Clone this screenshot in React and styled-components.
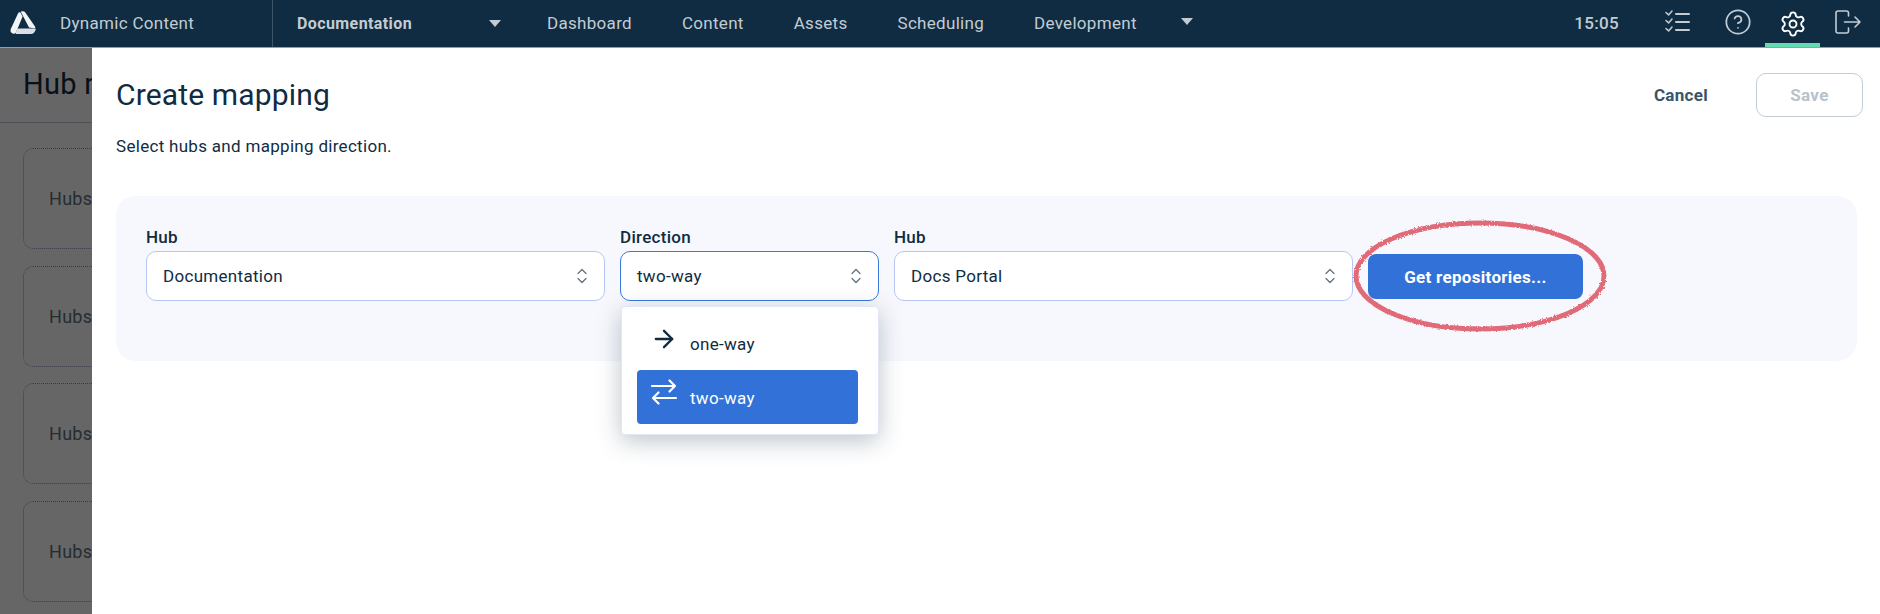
import React from 'react';
import styled, { createGlobalStyle } from 'styled-components';
import { ArrowRight, CircleHelp, Settings } from 'lucide-react';

const Global = createGlobalStyle`
    html, body {
        margin: 0;
        height: 100%;
        background: #fff;
    }
    #root {
        height: 100%;
    }
    * {
        box-sizing: border-box;
    }
`;

const FONT = `Roboto, "Noto Sans", sans-serif`;

const Screen = styled.div`
    position: relative;
    width: 1880px;
    height: 614px;
    overflow: hidden;
    font-family: ${FONT};
    color: #0f2c42;
    background: #fff;
    letter-spacing: 0.3px;
`;

const TopBar = styled.header`
    display: flex;
    align-items: stretch;
    height: 48px;
    background: #0f2c42;
    border-bottom: 1px solid #8fa0ad;
    color: #c3ccd3;
    font-size: 17px;
`;

const Brand = styled.div`
    display: flex;
    align-items: center;
    width: 273px;
    padding: 0 0 1px 10px;
    gap: 24px;
    border-right: 1px solid #3e5668;
`;

const HubName = styled.div`
    display: flex;
    align-items: center;
    justify-content: space-between;
    width: 228px;
    padding: 0 0 1px 24px;
    font-weight: 700;
    font-size: 16px;
    letter-spacing: 0.4px;
`;

const Nav = styled.nav`
    display: flex;
    align-items: center;
    gap: 50px;
    margin-left: 46px;
    padding-bottom: 1px;
`;

const Caret = styled.span`
    display: inline-block;
    width: 0;
    height: 0;
    border-left: 6.5px solid transparent;
    border-right: 6.5px solid transparent;
    border-top: 7px solid #c3ccd3;
`;

const NavCaret = styled(Caret)`
    margin-left: -6px;
    margin-top: -3px;
`;

const RightTools = styled.div`
    display: flex;
    align-items: center;
    margin-left: auto;
    padding-right: 5px;
`;

const Clock = styled.span`
    font-weight: 500;
    margin: 0 36px 1px 0;
`;

const ToolButton = styled.div`
    display: flex;
    align-items: center;
    justify-content: center;
    width: 55px;
    height: 47px;
    color: ${(p) => (p.$active ? '#fff' : '#c3ccd3')};
    border-bottom: 4px solid ${(p) => (p.$active ? '#63dbb0' : 'transparent')};
    padding-top: ${(p) => (p.$active ? 4 : 0)}px;
    padding-right: ${(p) => p.$inset || 0}px;
`;

const Behind = styled.main`
    height: 566px;
    overflow: hidden;
`;

const BehindHead = styled.div`
    height: 75px;
    padding: 16px 0 0 23px;
    font-size: 29px;
    line-height: 40px;
    border-bottom: 1px solid #c9c9e0;
`;

const HeadText = styled.div`
    width: 69px;
    overflow: hidden;
    white-space: nowrap;
`;

const BehindList = styled.div`
    display: flex;
    flex-direction: column;
    gap: 16.5px;
    padding: 25px 23px 0;
    width: 92px;
    overflow: hidden;
`;

const BehindCard = styled.div`
    display: flex;
    align-items: center;
    flex: none;
    height: 101px;
    width: 400px;
    padding-left: 25px;
    border: 1px dotted #8e90c4;
    border-radius: 10px;
    font-size: 18px;
    color: #5b7081;
`;

const Scrim = styled.div`
    position: absolute;
    inset: 48px 0 0 0;
    background: rgba(0, 0, 0, 0.6);
`;

const Drawer = styled.section`
    position: absolute;
    top: 48px;
    left: 92px;
    right: 0;
    bottom: 0;
    background: #fff;
    padding: 0 23px 0 24px;
`;

const DrawerHead = styled.div`
    display: flex;
    justify-content: space-between;
    align-items: flex-start;
    padding-top: 24px;
`;

const Title = styled.h1`
    margin: 0;
    font-size: 30px;
    font-weight: 400;
    line-height: 46px;
    letter-spacing: 0.15px;
`;

const Actions = styled.div`
    display: flex;
    align-items: center;
    gap: 48px;
    margin: 1px -6px 0 0;
`;

const Cancel = styled.span`
    font-weight: 700;
    font-size: 17px;
    color: #3a556b;
`;

const Save = styled.span`
    display: flex;
    align-items: center;
    justify-content: center;
    width: 107px;
    height: 44px;
    border: 1px solid #c3ccd3;
    border-radius: 10px;
    font-weight: 700;
    font-size: 17px;
    color: #b7c2ca;
`;

const Subtitle = styled.p`
    margin: 16px 0 0;
    font-size: 17px;
    line-height: 24px;
`;

const Panel = styled.div`
    display: flex;
    align-items: flex-end;
    gap: 15px;
    height: 165px;
    margin-top: 38px;
    padding: 0 30px 60px;
    background: #f7f8fd;
    border-radius: 20px;
`;

const Field = styled.div`
    position: relative;
    display: flex;
    flex-direction: column;
    gap: 4px;
    width: ${(p) => p.$w}px;
`;

const Label = styled.label`
    font-size: 17px;
    font-weight: 500;
    line-height: 20px;
`;

const Select = styled.div`
    display: flex;
    align-items: center;
    justify-content: space-between;
    height: 50px;
    padding: 0 16px;
    background: #fff;
    border: 1px solid ${(p) => (p.$focus ? '#3b78dc' : '#b7c6f5')};
    border-radius: 10px;
    font-size: 17px;
`;

const Menu = styled.div`
    position: absolute;
    top: 79px;
    left: 1px;
    right: 0;
    height: 129px;
    padding: 15px 20px 10px 15px;
    background: #fff;
    border: 1px solid #e2e6f6;
    border-radius: 4px;
    box-shadow: 0 6px 24px rgba(15, 44, 66, 0.28);
    z-index: 2;
`;

const MenuItem = styled.div`
    display: flex;
    align-items: flex-start;
    height: ${(p) => (p.$active ? 54 : 47)}px;
    margin-bottom: ${(p) => (p.$active ? 0 : 1)}px;
    padding: ${(p) => (p.$active ? '9px 0 0 13px' : '3px 0 0 13px')};
    gap: 12px;
    font-size: 17px;
    border-radius: 4px;
    background: ${(p) => (p.$active ? '#3171d8' : 'transparent')};
    color: ${(p) => (p.$active ? '#fff' : '#0f2c42')};
`;

const MenuText = styled.span`
    margin-top: 9px;
`;

const GetButton = styled.button`
    width: 215px;
    height: 45px;
    margin-bottom: 2px;
    border: none;
    outline: none;
    border-radius: 8px;
    background: #3171d8;
    color: #fff;
    font-family: inherit;
    font-size: 17px;
    font-weight: 700;
    letter-spacing: 0.3px;
`;

const Scribble = styled.svg`
    position: absolute;
    top: 216px;
    left: 1349px;
    pointer-events: none;
`;

const Logo = () => (
    <svg width="26" height="24" viewBox="0 0 26 24" fill="#f2f4f6">
        <path d="M8 2.500C8.600 1.200 9.600 1 10.400 1.600L12.600 5.600 6 21.500C5 23 2.400 23.200 1.200 21.600.3 20.400.4 18.800 1 17.400Z" />
        <path d="M10.800 .8C12.400 0 14.300 .2 15.300 1.500L25 15.600C25.800 16.800 25 17.400 24 17.200L19 16.600 10.800 .8Z" />
        <path d="M7.500 17.600H25.200C25.800 17.600 25.900 18.200 25.600 18.900 24.800 21.200 23.200 23 20.800 23H6.800C5.800 23 5.400 22.400 5.800 21.500Z" fill="#d9dfe4" />
    </svg>
);

const TasksIcon = () => (
    <svg width="28" height="26" viewBox="0 0 28 26" fill="none" stroke="currentColor" strokeWidth="2" strokeLinecap="round" strokeLinejoin="round">
        <path d="M2 3.500l2.600 2.400L8 2" strokeWidth="1.500" />
        <path d="M2 11.500l2.600 2.400L8 10" strokeWidth="1.500" />
        <path d="M2 19.500l2.600 2.400L8 18" strokeWidth="1.500" />
        <path d="M12 5h13M12 13h13M12 21h13" />
    </svg>
);

const ExitIcon = () => (
    <svg width="28" height="28" viewBox="0 0 28 28" fill="none" stroke="currentColor" strokeWidth="1.600" strokeLinecap="round" strokeLinejoin="round">
        <path d="M14.500 8V5a2 2 0 0 0-2-2H4a2 2 0 0 0-2 2v18a2 2 0 0 0 2 2h8.500a2 2 0 0 0 2-2v-3" />
        <path d="M10.500 14H26M21 9l5 5-5 5" />
    </svg>
);

const UpDown = () => (
    <svg width="12" height="16" viewBox="0 0 12 16" fill="none" stroke="#5b7081" strokeWidth="1.200" strokeLinecap="round" strokeLinejoin="round">
        <path d="M2 5.500L6 1.500l4 4M2 10.500l4 4 4-4" />
    </svg>
);

const TwoWay = () => (
    <svg width="28" height="26" viewBox="0 0 28 26" fill="none" stroke="currentColor" strokeWidth="2.200" strokeLinecap="round" strokeLinejoin="round">
        <path d="M2 7h23M19.500 1.500L25 7l-5.500 5.500" />
        <path d="M26 19H3M8.500 13.500L3 19l5.500 5.500" />
    </svg>
);

const hubs = [0, 1, 2, 3];

export default function App() {
    return (
        <Screen>
            <Global />
            <TopBar>
                <Brand>
                    <Logo />
                    <span>Dynamic Content</span>
                </Brand>
                <HubName>
                    Documentation
                    <Caret />
                </HubName>
                <Nav>
                    <span>Dashboard</span>
                    <span>Content</span>
                    <span>Assets</span>
                    <span>Scheduling</span>
                    <span>Development</span>
                    <NavCaret />
                </Nav>
                <RightTools>
                    <Clock>15:05</Clock>
                    <ToolButton $inset={10}><TasksIcon /></ToolButton>
                    <ToolButton><CircleHelp size={28} strokeWidth={1.5} /></ToolButton>
                    <ToolButton $active><Settings size={28} strokeWidth={1.6} /></ToolButton>
                    <ToolButton><ExitIcon /></ToolButton>
                </RightTools>
            </TopBar>

            <Behind>
                <BehindHead><HeadText>Hub mappings</HeadText></BehindHead>
                <BehindList>
                    {hubs.map((h) => (
                        <BehindCard key={h}>Hubs</BehindCard>
                    ))}
                </BehindList>
            </Behind>

            <Scrim />

            <Drawer>
                <DrawerHead>
                    <Title>Create mapping</Title>
                    <Actions>
                        <Cancel>Cancel</Cancel>
                        <Save>Save</Save>
                    </Actions>
                </DrawerHead>
                <Subtitle>Select hubs and mapping direction.</Subtitle>
                <Panel>
                    <Field $w={459}>
                        <Label>Hub</Label>
                        <Select>Documentation<UpDown /></Select>
                    </Field>
                    <Field $w={259}>
                        <Label>Direction</Label>
                        <Select $focus>two-way<UpDown /></Select>
                        <Menu>
                            <MenuItem>
                                <ArrowRight size={28} strokeWidth={2} />
                                <MenuText>one-way</MenuText>
                            </MenuItem>
                            <MenuItem $active>
                                <TwoWay />
                                <MenuText>two-way</MenuText>
                            </MenuItem>
                        </Menu>
                    </Field>
                    <Field $w={459}>
                        <Label>Hub</Label>
                        <Select>Docs Portal<UpDown /></Select>
                    </Field>
                    <GetButton>Get repositories...</GetButton>
                </Panel>
            </Drawer>

            <Scribble width="265" height="120" viewBox="0 0 265 120">
                <defs>
                    <filter id="rough" x="-5%" y="-10%" width="110%" height="120%">
                        <feTurbulence type="fractalNoise" baseFrequency="0.6" numOctaves="2" seed="4" result="n" />
                        <feDisplacementMap in="SourceGraphic" in2="n" scale="3" />
                    </filter>
                </defs>
                <ellipse cx="131" cy="60" rx="124" ry="53" fill="none" stroke="#e06a78" strokeWidth="5" filter="url(#rough)" />
            </Scribble>
        </Screen>
    );
}
